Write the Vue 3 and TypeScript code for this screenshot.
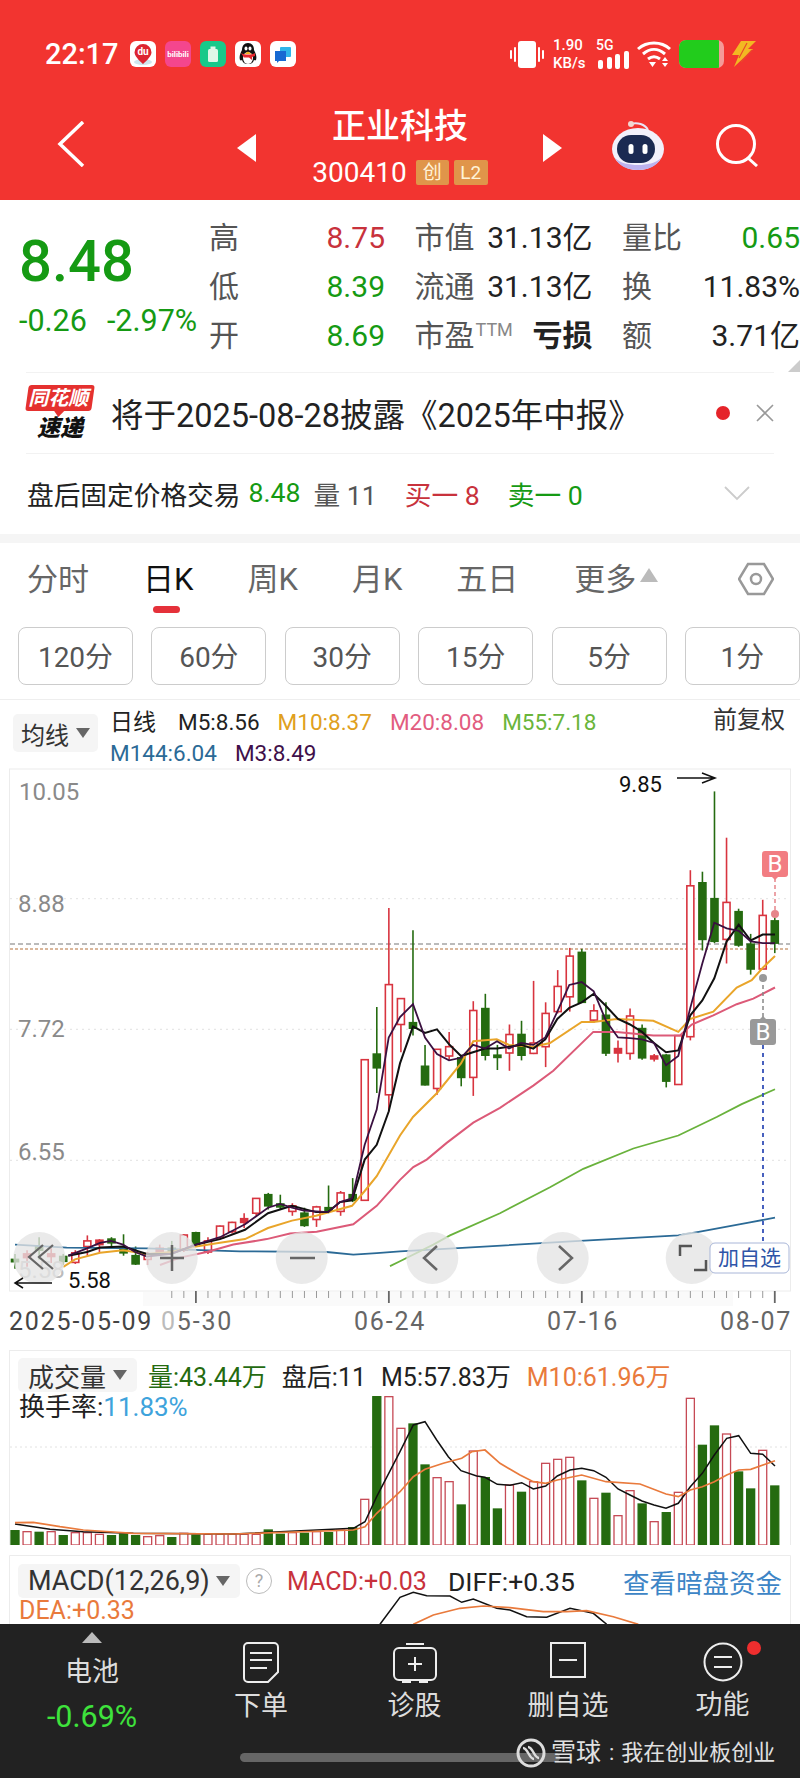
<script setup lang="ts">
// coordinates below are read off the zoomed reference: x * 3, chart y * 2.703
const CX = 3
const CY = 2.703
const px = (x: number) => +(x / CX).toFixed(1)
const py = (y: number) => +(y / CY - 8).toFixed(1)
const barX = (i: number) => 15 + 12.06 * i

type Candle = [number, number, number, number, 'r' | 'g']
const candleData: Candle[] = [
  [1335, 1375, 1350, 1356, 'g'], [1325, 1370, 1335, 1345, 'r'], [1290, 1350, 1315, 1325, 'g'], [1320, 1360, 1335, 1342, 'r'],
  [1335, 1365, 1342, 1355, 'g'], [1325, 1362, 1332, 1358, 'r'], [1285, 1340, 1300, 1315, 'r'], [1295, 1330, 1298, 1310, 'r'],
  [1290, 1320, 1295, 1305, 'g'], [1282, 1340, 1320, 1332, 'g'], [1315, 1365, 1340, 1362, 'g'], [1330, 1365, 1335, 1350, 'r'],
  [1310, 1340, 1320, 1330, 'r'], [1300, 1350, 1320, 1330, 'g'], [1282, 1330, 1284, 1325, 'r'], [1275, 1310, 1278, 1308, 'g'],
  [1290, 1335, 1300, 1330, 'r'], [1258, 1295, 1260, 1292, 'r'], [1248, 1280, 1250, 1275, 'r'], [1225, 1265, 1240, 1250, 'r'],
  [1185, 1235, 1185, 1225, 'r'], [1170, 1215, 1175, 1205, 'g'], [1175, 1215, 1200, 1208, 'g'], [1198, 1232, 1205, 1220, 'r'],
  [1210, 1262, 1225, 1258, 'g'], [1205, 1262, 1208, 1242, 'r'], [1150, 1225, 1210, 1218, 'g'], [1165, 1232, 1170, 1220, 'r'],
  [1130, 1195, 1175, 1190, 'g'], [810, 1190, 810, 1190, 'r'], [668, 900, 795, 832, 'g'], [400, 950, 607, 905, 'r'],
  [645, 790, 645, 715, 'r'], [460, 745, 710, 725, 'g'], [770, 880, 828, 878, 'g'], [782, 905, 782, 888, 'r'],
  [735, 810, 775, 800, 'r'], [800, 882, 805, 858, 'g'], [652, 908, 677, 858, 'r'], [632, 812, 672, 798, 'g'],
  [770, 838, 798, 804, 'g'], [715, 840, 742, 792, 'r'], [705, 812, 742, 798, 'g'], [597, 795, 765, 793, 'r'],
  [655, 830, 685, 775, 'r'], [568, 685, 612, 680, 'r'], [508, 680, 530, 640, 'r'], [510, 655, 520, 655, 'g'],
  [660, 710, 678, 703, 'r'], [655, 800, 690, 792, 'g'], [758, 818, 780, 792, 'r'], [672, 810, 692, 793, 'r'],
  [715, 810, 726, 805, 'g'], [795, 815, 800, 808, 'r'], [795, 885, 798, 868, 'g'], [745, 877, 745, 877, 'r'],
  [298, 758, 340, 748, 'r'], [302, 515, 332, 485, 'g'], [85, 495, 375, 490, 'g'], [210, 550, 385, 485, 'r'],
  [402, 505, 410, 500, 'g'], [470, 580, 498, 565, 'g'], [378, 565, 420, 565, 'r'], [425, 522, 435, 495, 'g'],
]

const candles = candleData.map(([hi, lo, top, bottom, c], i) => ({
  x: barX(i),
  y1: py(hi),
  y2: py(lo),
  top: py(top),
  h: Math.max(py(bottom) - py(top), 2),
  red: c === 'r',
  solid: c === 'g' || py(bottom) - py(top) < 5,
}))

// left part in whole-chart units, right part continues from the second crop
const line = (left: number[], right: number[]) => {
  const out: string[] = []
  for (let i = 0; i < left.length; i += 2) out.push(`${px(left[i])},${py(left[i + 1])}`)
  for (let i = 0; i < right.length; i += 2) out.push(`${px(right[i] + 1200)},${py(right[i + 1])}`)
  return out.join(' ')
}

const maLines = [
  { color: '#2b6a96', w: 1.8, pts: line([45, 1310, 200, 1318, 440, 1320, 720, 1328, 980, 1330, 1060, 1337, 1130, 1333], [0, 1328, 200, 1318, 500, 1302, 835, 1285, 900, 1275, 1050, 1250, 1125, 1237]) },
  { color: '#69b23c', w: 1.8, pts: line([1170, 1368], [0, 1355, 100, 1310, 150, 1285, 300, 1225, 450, 1155, 550, 1105, 700, 1050, 835, 1015, 950, 965, 1025, 930, 1125, 890]) },
  { color: '#dc5a78', w: 2, pts: line([480, 1365, 540, 1345, 620, 1330, 700, 1310, 800, 1295, 870, 1280, 950, 1275, 1060, 1255, 1130, 1205], [0, 1135, 40, 1100, 80, 1080, 140, 1035, 220, 980, 300, 940, 400, 880, 460, 840, 580, 735, 650, 735, 760, 745, 840, 745, 875, 715, 940, 690, 1010, 660, 1060, 645, 1125, 615]) },
  { color: '#e9a52a', w: 2, pts: line([190, 1370, 225, 1350, 300, 1332, 369, 1325, 441, 1335, 513, 1330, 588, 1315, 660, 1305, 735, 1295, 804, 1265, 876, 1245, 948, 1232, 1056, 1205, 1094, 1165, 1130, 1125], [0, 1015, 39, 965, 111, 900, 183, 820, 220, 760, 290, 755, 327, 770, 400, 775, 450, 765, 545, 708, 580, 708, 650, 700, 760, 705, 835, 735, 870, 700, 940, 680, 1010, 615, 1055, 595, 1090, 560, 1125, 530]) },
  { color: '#111111', w: 2, pts: line([205, 1340, 261, 1330, 300, 1318, 369, 1315, 441, 1335, 513, 1335, 588, 1310, 660, 1295, 735, 1270, 804, 1225, 876, 1205, 948, 1222, 984, 1222, 1020, 1195, 1056, 1190, 1094, 1080, 1130, 1040, 1166, 950], [0, 820, 39, 720, 75, 738, 111, 728, 147, 768, 183, 800, 219, 790, 255, 780, 291, 780, 327, 775, 363, 770, 400, 780, 436, 755, 472, 700, 508, 670, 545, 655, 581, 632, 618, 665, 654, 700, 690, 715, 726, 735, 762, 765, 798, 790, 835, 785, 871, 690, 907, 650, 943, 590, 980, 490, 1016, 445, 1052, 488, 1088, 472, 1125, 472]) },
  { color: '#3a1040', w: 1.8, pts: line([205, 1340, 261, 1320, 300, 1305, 333, 1300, 369, 1310, 405, 1330, 441, 1342, 513, 1335, 588, 1310, 660, 1290, 735, 1255, 804, 1210, 840, 1200, 876, 1210, 912, 1218, 984, 1222, 1020, 1195, 1056, 1185, 1094, 1040, 1130, 945, 1166, 750], [0, 695, 39, 660, 75, 750, 111, 795, 147, 812, 183, 805, 219, 770, 255, 780, 291, 760, 327, 780, 363, 765, 400, 770, 436, 750, 472, 680, 508, 608, 545, 600, 581, 625, 618, 705, 654, 750, 690, 752, 726, 755, 762, 765, 798, 825, 835, 800, 871, 670, 907, 550, 943, 440, 980, 455, 1016, 462, 1052, 490, 1088, 495, 1125, 495]) },
]

const gridY = [375, 728, 1082].map(py)
const ticks = Array.from({ length: 64 }, (_, i) => ({ x: barX(i), major: i === 15 || i === 31 || i === 47 || i === 63 })).slice(13)
const overlayBtns = [118, 515, 905, 1297, 1688, 2075].map(px)

const volTops: [number, 'r' | 'g'][] = [
  [572, 'g'], [575, 'r'], [577, 'g'], [575, 'r'], [587, 'g'], [578, 'r'], [578, 'r'], [583, 'r'], [587, 'g'], [582, 'g'], [587, 'g'], [590, 'r'],
  [587, 'r'], [593, 'g'], [580, 'r'], [585, 'g'], [583, 'r'], [583, 'r'], [583, 'r'], [583, 'r'], [583, 'r'], [570, 'g'], [583, 'g'], [578, 'r'],
  [580, 'g'], [575, 'r'], [578, 'g'], [570, 'r'], [563, 'g'], [478, 'r'], [170, 'g'], [170, 'r'], [265, 'r'], [252, 'g'], [375, 'g'], [413, 'r'],
  [425, 'r'], [495, 'g'], [333, 'r'], [413, 'g'], [507, 'g'], [435, 'r'], [457, 'g'], [425, 'r'], [370, 'r'], [358, 'r'], [352, 'r'], [423, 'g'],
  [475, 'r'], [460, 'g'], [527, 'r'], [452, 'r'], [492, 'g'], [545, 'r'], [518, 'g'], [457, 'r'], [175, 'r'], [316, 'g'], [258, 'g'], [282, 'r'],
  [396, 'g'], [447, 'g'], [331, 'r'], [438, 'g'],
]
const VOL_TOP = 30 // first zoomed y inside the volume panel
const volBars = volTops.map(([top, c], i) => ({
  x: barX(i) - 4,
  y: (top - VOL_TOP) / 3,
  h: (615 - top) / 3,
  red: c === 'r',
}))

const line3 = (left: number[], right: number[], top: number) => {
  const out: string[] = []
  for (let i = 0; i < left.length; i += 2) out.push(`${px(left[i])},${((left[i + 1] - top) / 3).toFixed(1)}`)
  for (let i = 0; i < right.length; i += 2) out.push(`${px(right[i] + 1200)},${((right[i + 1] - top) / 3).toFixed(1)}`)
  return out.join(' ')
}
const volBlack = line3([45, 552, 150, 568, 250, 575, 400, 580, 700, 582, 1060, 565, 1095, 545, 1130, 470], [0, 335, 40, 255, 75, 245, 110, 300, 145, 350, 183, 392, 230, 408, 255, 412, 292, 433, 330, 436, 365, 428, 400, 447, 437, 438, 472, 408, 510, 390, 545, 385, 581, 392, 618, 412, 654, 447, 690, 465, 726, 483, 762, 495, 798, 505, 835, 490, 871, 440, 907, 400, 943, 345, 980, 295, 1016, 287, 1052, 340, 1088, 343, 1125, 378], VOL_TOP)
const volOrange = line3([45, 548, 100, 547, 180, 560, 250, 570, 400, 580, 700, 582, 1060, 570, 1095, 560, 1130, 520], [0, 455, 40, 410, 75, 388, 130, 370, 185, 355, 215, 335, 255, 330, 300, 370, 360, 405, 400, 425, 437, 430, 472, 420, 545, 405, 618, 425, 720, 432, 798, 462, 835, 470, 871, 450, 907, 440, 943, 425, 980, 405, 1016, 390, 1052, 388, 1125, 362], VOL_TOP)

const MACD_TOP = 645
const macdBlack = line3([1140, 853], [0, 772, 40, 757, 80, 767, 150, 768, 185, 787, 220, 777, 290, 805, 330, 810, 380, 830, 440, 832, 510, 805, 580, 820, 620, 853], MACD_TOP)
const macdOrange = line3([], [40, 853, 100, 825, 180, 805, 250, 798, 330, 803, 430, 815, 500, 815, 560, 812, 640, 830, 715, 853], MACD_TOP)

const periods = ['120分', '60分', '30分', '15分', '5分', '1分']
const tabs = ['分时', '日K', '周K', '月K', '五日']
const cells = [
  { k: '高', v: '8.75', c: 'up' }, { k: '市值', v: '31.13亿', c: '' }, { k: '量比', v: '0.65', c: 'down' },
  { k: '低', v: '8.39', c: 'down' }, { k: '流通', v: '31.13亿', c: '' }, { k: '换', v: '11.83%', c: '' },
  { k: '开', v: '8.69', c: 'down' }, { k: '市盈', sup: 'TTM', v: '亏损', c: 'heavy' }, { k: '额', v: '3.71亿', c: '' },
]
</script>

<template>
  <div class="page">
    <header class="head">
      <div class="status">
        <span class="time">22:17</span>
        <div class="apps">
          <svg width="26" height="26" viewBox="0 0 26 26"><rect width="26" height="26" rx="6" fill="#fff" /><ellipse cx="13" cy="21" rx="9" ry="3" fill="#cfe6ee" /><path d="M13 3a8.500 8.500 0 0 1 8.500 8.500C21.500 16 13 23 13 23S4.500 16 4.500 11.500A8.500 8.500 0 0 1 13 3z" fill="#dd2530" /><text class="du" x="13" y="14">du</text></svg>
          <svg width="26" height="26" viewBox="0 0 26 26"><rect width="26" height="26" rx="6" fill="#f4468d" /><text class="bili" x="13" y="16">bilibili</text></svg>
          <svg width="26" height="26" viewBox="0 0 26 26"><rect width="26" height="26" rx="6" fill="#18c98a" /><rect x="8" y="8" width="10" height="13" rx="1.500" fill="#dff7e8" /><rect x="10.500" y="5.500" width="5" height="2.500" fill="#dff7e8" /></svg>
          <svg width="26" height="26" viewBox="0 0 26 26"><rect width="26" height="26" rx="6" fill="#fff" /><path d="M13 2c4 0 6 3 6 7 2 4 3 7 2 10-1 1-2 0-2 0-1 3-3 4-6 4s-5-1-6-4c0 0-1 1-2 0-1-3 0-6 2-10 0-4 2-7 6-7z" fill="#111" /><ellipse cx="13" cy="17" rx="5" ry="6" fill="#fff" /><path d="M6 12c4 2 10 2 14 0v3l-3 1v3l-3-2.500H9z" fill="#e5262c" /><path d="M9.500 13 13 10.500l3.500 2.500z" fill="#f4b41a" /><ellipse cx="11" cy="7.500" rx="1.500" ry="2" fill="#fff" /><ellipse cx="15" cy="7.500" rx="1.500" ry="2" fill="#fff" /></svg>
          <svg width="26" height="26" viewBox="0 0 26 26"><rect width="26" height="26" rx="6" fill="#fff" /><rect x="10" y="6" width="11" height="10" rx="1" fill="#2fb5ea" /><path d="M5 10h11v10H9l-2 2v-2H5z" fill="#1769d2" /></svg>
        </div>
        <div class="sys">
          <svg class="vib" width="34" height="27" viewBox="0 0 34 27"><rect x="8" y="0" width="18" height="27" rx="3" fill="#fff" /><path d="M5 7v13M1 10v7M29 7v13M33 10v7" stroke="#fff" stroke-width="2" stroke-linecap="round" /></svg>
          <div class="speed"><span>1.90</span><span>KB/s</span></div>
          <div class="net">
            <span class="g5">5G</span>
            <svg width="34" height="18" viewBox="0 0 34 18"><rect x="2" y="9" width="5" height="9" rx="2" fill="#fff" /><rect x="11" y="6" width="5" height="12" rx="2" fill="#fff" /><rect x="19" y="3" width="5" height="15" rx="2" fill="#fff" /><rect x="28" y="0" width="5" height="18" rx="2" fill="#fff" /></svg>
          </div>
          <svg class="wifi" width="34" height="27" viewBox="0 0 34 27"><path d="M1 8C10 0 24 0 33 8M6 13c7-6 15-6 22 0M11 18c4-3 8-3 12 0" fill="none" stroke="#fff" stroke-width="3" /><path d="m12 21 7 0-3.500 5zM25 20l3-4 3 4zM25 22h6l-3 4z" fill="#fff" /></svg>
          <div class="batt"><i></i></div>
          <svg class="bolt" width="24" height="26" viewBox="0 0 24 26"><path d="M9 0h15l-8 8 5 0L2 26l5-12H0z" fill="#f2b822" /><path d="M15 2 7 17M20 9 9 21" stroke="#ea4a2a" stroke-width="1.200" /></svg>
        </div>
      </div>
      <div class="bar">
        <svg class="back" width="28" height="46" viewBox="0 0 28 46"><path d="M26 1 3 23l23 22" fill="none" stroke="#fff" stroke-width="3.500" /></svg>
        <span class="tri left"></span>
        <div class="name">
          <div class="cn">正业科技</div>
          <div class="code">300410<b>创</b><b class="l2">L2</b></div>
        </div>
        <span class="tri right"></span>
        <svg class="robot" width="54" height="50" viewBox="0 0 54 50"><path d="M20 4c6-2 14 0 17 6" fill="none" stroke="#e9e4f5" stroke-width="2" /><circle cx="20" cy="4" r="3" fill="#f2d6d0" /><ellipse cx="27" cy="29" rx="26" ry="21" fill="#f2f0fb" /><path d="M4 38c4 8 12 12 23 12s19-4 23-12c-5 5-14 7-23 7S9 43 4 38z" fill="#bdb2ee" /><rect x="6" y="15" width="38" height="28" rx="14" fill="#1b2a52" /><rect x="17.500" y="24" width="5" height="10" rx="2.500" fill="#fff" /><rect x="31.500" y="24" width="5" height="10" rx="2.500" fill="#fff" /></svg>
        <svg class="search" width="46" height="44" viewBox="0 0 46 44"><circle cx="21" cy="21" r="18.500" fill="none" stroke="#fff" stroke-width="3" /><path d="m33 35 9 8" stroke="#fff" stroke-width="3" /></svg>
      </div>
    </header>

    <section class="quote">
      <div class="now">
        <div class="price">8.48</div>
        <div class="chg"><span>-0.26</span><span>-2.97%</span></div>
      </div>
      <div class="cells">
        <div v-for="c in cells" :key="c.k" class="cell">
          <span class="k">{{ c.k }}<sup v-if="c.sup">{{ c.sup }}</sup></span>
          <span :class="c.c">{{ c.v }}</span>
        </div>
      </div>
      <span class="corner"></span>
    </section>

    <section class="notice">
      <div class="logo">
        <div class="logo-top"><span>同花顺</span></div>
        <div class="logo-bot">速递</div>
      </div>
      <span class="notice-text">将于2025-08-28披露《2025年中报》</span>
      <span class="dot"></span>
      <svg width="18" height="18" viewBox="0 0 18 18"><path d="m1 1 16 16M17 1 1 17" stroke="#999" stroke-width="1.600" /></svg>
    </section>

    <section class="after">
      <span>盘后固定价格交易</span>
      <span class="down a-price">8.48</span>
      <span class="muted a-vol">量 11</span>
      <span class="up a-buy">买一 8</span>
      <span class="down a-sell">卖一 0</span>
      <svg class="a-open" width="26" height="15" viewBox="0 0 26 15"><path d="m1 1 12 12L25 1" fill="none" stroke="#ccc" stroke-width="1.800" /></svg>
    </section>

    <nav class="tabs">
      <span v-for="t in tabs" :key="t" class="tab" :class="{ on: t === '日K' }">{{ t }}</span>
      <span class="tab more">更多<i></i></span>
      <svg class="hex" width="36" height="36" viewBox="0 0 36 36"><path d="M10 3h16l9 15-9 15H10L1 18z" fill="none" stroke="#999" stroke-width="2.500" /><circle cx="18" cy="18" r="5" fill="none" stroke="#999" stroke-width="2.500" /></svg>
    </nav>

    <div class="periods">
      <button v-for="p in periods" :key="p" class="period">{{ p }}</button>
    </div>

    <section class="legend">
      <div class="chip"><span>均线</span><i></i></div>
      <div class="legend-lines">
        <div><span class="ink l-name">日线</span><span class="ink">M5:8.56</span><span class="m10">M10:8.37</span><span class="m20">M20:8.08</span><span class="m55">M55:7.18</span></div>
        <div><span class="m144">M144:6.04</span><span class="m3">M3:8.49</span></div>
      </div>
      <span class="fq">前复权</span>
    </section>

    <svg class="kline" width="800" height="582" viewBox="0 0 800 582">
      <rect x="9.500" y="1" width="781" height="522" fill="#fff" stroke="#ececec" />
      <rect x="143" y="524" width="590" height="14" fill="#fafafa" />
      <line v-for="y in gridY" :key="y" x1="10" x2="790" :y1="y" :y2="y" stroke="#e2e2e2" stroke-dasharray="2 4" />
      <text class="ax" x="19" y="32">10.05</text>
      <text class="ax" x="18" y="144">8.88</text>
      <text class="ax" x="18" y="269">7.72</text>
      <text class="ax" x="18" y="392">6.55</text>
      <line x1="10" x2="790" y1="176" y2="176" stroke="#777" stroke-dasharray="5 3" />
      <line x1="10" x2="790" y1="181" y2="181" stroke="#b5713a" stroke-dasharray="3 2" />
      <g v-for="(c, i) in candles" :key="i">
        <line :x1="c.x" :x2="c.x" :y1="c.y1" :y2="c.y2" :stroke="c.red ? '#d8343f' : '#256b10'" stroke-width="1.600" />
        <rect :x="c.x - 3.5" :y="c.top" width="7" :height="c.h" :fill="c.solid ? (c.red ? '#d8343f' : '#256b10') : '#fff'" :stroke="c.red ? '#d8343f' : '#256b10'" stroke-width="1.600" />
      </g>
      <polyline v-for="l in maLines" :key="l.color" :points="l.pts" fill="none" :stroke="l.color" :stroke-width="l.w" />
      <text class="mark" x="619" y="24">9.85</text>
      <path d="M677 10h38m-13-5 13 5-13 5" fill="none" stroke="#111" stroke-width="1.500" />
      <text class="ax pale" x="18" y="510">5.58</text>
      <g v-for="x in overlayBtns" :key="x"><circle :cx="x" cy="490" r="26" fill="#e4e4e4" fill-opacity=".78" /></g>
      <path d="M43 477 29 489l14 12M53 477 39 489l14 12" fill="none" stroke="#666" stroke-width="2.200" />
      <path d="M184 490h-24M172 477v26" stroke="#666" stroke-width="2.500" />
      <path d="M315 490h-25" stroke="#666" stroke-width="2.500" />
      <path d="m437 478-13 12 13 12" fill="none" stroke="#666" stroke-width="2.500" />
      <path d="m559 478 13 12-13 12" fill="none" stroke="#666" stroke-width="2.500" />
      <path d="M680 488v-10h12M706 492v10h-12" fill="none" stroke="#555" stroke-width="2.500" />
      <path d="M52 515H16m7-5-8 5 8 5" fill="none" stroke="#111" stroke-width="1.500" />
      <text class="mark" x="68" y="520">5.58</text>

      <path d="M775 110v36" stroke="#e6858a" stroke-width="1.500" stroke-dasharray="4 3" />
      <circle cx="775" cy="146" r="4" fill="#e6858a" />
      <rect x="762" y="83" width="26" height="26" rx="3" fill="#f27d82" />
      <path d="m771 108 4 4 4-4z" fill="#f27d82" />
      <text class="b" x="775" y="104">B</text>
      <path d="M763 210v44" stroke="#888" stroke-width="1.500" stroke-dasharray="4 3" />
      <circle cx="763" cy="210" r="4" fill="#999" />
      <rect x="750" y="251" width="26" height="26" rx="3" fill="#999" />
      <path d="m759 252 4-4 4 4z" fill="#999" />
      <text class="b" x="763" y="272">B</text>
      <path d="M763 277v199" stroke="#3450b8" stroke-width="1.800" stroke-dasharray="4 4" />
      <rect x="710" y="475" width="79" height="30" rx="5" fill="#fff" stroke="#a9b6d8" />
      <text class="add" x="749.500" y="497">加自选</text>

      <line v-for="t in ticks" :key="t.x" :x1="t.x" :x2="t.x" y1="523" :y2="t.major ? 535 : 530" :stroke="t.major ? '#666' : '#999'" :stroke-width="t.major ? 1.800 : 1" />
      <text class="date dark" x="9" y="562">2025-05-09</text>
      <text class="date" x="161" y="562"><tspan fill="#bbb">0</tspan>5-30</text>
      <text class="date" x="354" y="562">06-24</text>
      <text class="date" x="547" y="562">07-16</text>
      <text class="date" x="720" y="562">08-07</text>
    </svg>

    <section class="panel vol">
      <svg width="800" height="195" viewBox="0 0 800 195">
        <rect x="9.500" y="0.500" width="781" height="195" fill="#fff" stroke="#ececec" />
        <line x1="10" x2="790" y1="97" y2="97" stroke="#e2e2e2" stroke-dasharray="2 3" />
        <rect v-for="(b, i) in volBars" :key="i" :x="b.x" :y="b.y" width="8" :height="b.h" :fill="b.red ? '#fff' : '#256b10'" :stroke="b.red ? '#c64a55' : '#256b10'" stroke-width="1.300" />
        <polyline :points="volBlack" fill="none" stroke="#111" stroke-width="1.500" />
        <polyline :points="volOrange" fill="none" stroke="#e97a3c" stroke-width="1.700" />
      </svg>
      <div class="panel-head">
        <div class="chip vchip"><span>成交量</span><i></i></div>
        <span class="green-d v1">量:43.44万</span>
        <span class="ink v2">盘后:11</span>
        <span class="ink v3">M5:57.83万</span>
        <span class="orange v4">M10:61.96万</span>
      </div>
      <div class="turn"><span class="ink">换手率:</span><span class="sky">11.83%</span></div>
    </section>

    <section class="panel macd">
      <svg width="800" height="69" viewBox="0 0 800 69">
        <path d="M9.500 69V.5h781V69" fill="none" stroke="#ececec" />
        <polyline :points="macdBlack" fill="none" stroke="#111" stroke-width="1.500" />
        <polyline :points="macdOrange" fill="none" stroke="#e97a3c" stroke-width="1.700" />
      </svg>
      <div class="panel-head mhead">
        <div class="chip mchip"><span>MACD(12,26,9)</span><i></i></div>
        <span class="qm">?</span>
        <span class="red m1">MACD:+0.03</span>
        <span class="ink m2">DIFF:+0.35</span>
        <span class="link">查看暗盘资金</span>
      </div>
      <div class="dea">DEA:+0.33</div>
    </section>

    <footer class="foot">
      <div class="fitem first">
        <i class="up-tri"></i>
        <span class="f-name">电池</span>
        <span class="f-pct">-0.69%</span>
      </div>
      <div class="fitem w1">
        <svg width="36" height="41" viewBox="0 0 36 41"><path d="M5 1h26a4 4 0 0 1 4 4v25L25 40H5a4 4 0 0 1-4-4V5a4 4 0 0 1 4-4z" fill="none" stroke="#eee" stroke-width="2" /><path d="M7 11h22M7 18h22M7 26h17" stroke="#eee" stroke-width="2" /></svg>
        <span>下单</span>
      </div>
      <div class="fitem w2">
        <svg width="44" height="41" viewBox="0 0 44 41"><rect x="1" y="6" width="42" height="32" rx="5" fill="none" stroke="#eee" stroke-width="2" /><path d="M13 2h18M22 15v14M15 22h14M10 38v2h8M26 40h8v-2" fill="none" stroke="#eee" stroke-width="2" /></svg>
        <span>诊股</span>
      </div>
      <div class="fitem w3">
        <svg width="36" height="36" viewBox="0 0 36 36"><rect x="1" y="1" width="34" height="34" fill="none" stroke="#eee" stroke-width="2" /><path d="M9 18h18" stroke="#eee" stroke-width="2" /></svg>
        <span class="f-gap">删自选</span>
      </div>
      <div class="fitem w4">
        <svg width="40" height="40" viewBox="0 0 40 40"><circle cx="20" cy="20" r="18.500" fill="none" stroke="#eee" stroke-width="2" /><path d="M11 15h18M11 25h18" stroke="#eee" stroke-width="2" /></svg>
        <span>功能</span>
        <i class="f-dot"></i>
      </div>
      <div class="home"></div>
      <div class="mark-wm">
        <svg width="30" height="30" viewBox="0 0 30 30"><circle cx="15" cy="15" r="13" fill="none" stroke="#ddd" stroke-width="3" /><path d="M7 10c5 0 6 11 11 11M23 20c-5 0-6-11-11-11" fill="none" stroke="#ddd" stroke-width="2.500" /></svg>
        <span class="wm-a">雪球</span><span class="wm-c">:</span><span class="wm-b">我在创业板创业</span>
      </div>
    </footer>
  </div>
</template>

<style scoped>
.page {
  position: relative;
  width: 800px;
  height: 1778px;
  overflow: hidden;
  background: #fff;
  font-family: Roboto, "Noto Sans CJK SC", sans-serif;
  color: #222;
}
.head { height: 200px; background: #f23430; color: #fff; }
.status { display: flex; align-items: center; height: 54px; padding: 27px 44px 0 45px; }
.time { font-size: 29px; font-weight: 500; width: 85px; }
.apps { display: flex; gap: 9px; }
.du { font-size: 10px; font-weight: 700; fill: #fff; text-anchor: middle; }
.bili { font-size: 8px; font-weight: 700; fill: #fff; text-anchor: middle; }
.sys { display: flex; align-items: center; margin-left: auto; }
.speed { display: flex; flex-direction: column; align-items: flex-start; font-size: 15px; line-height: 18px; font-weight: 500; margin-left: 9px; width: 43px; }
.net { display: flex; flex-direction: column; width: 41px; font-weight: 500; }
.g5 { font-size: 14px; line-height: 12px; }
.wifi { width: 34px; }
.batt { width: 45px; height: 28px; margin-left: 8px; background: #f59a98; border-radius: 7px; overflow: hidden; }
.batt i { display: block; width: 40px; height: 100%; background: #22cc1c; }
.bolt { margin-left: 8px; }
.bar { position: relative; display: flex; align-items: center; justify-content: center; height: 100px; margin-top: 4px; }
.back { position: absolute; left: 57px; top: 36px; }
.tri { position: absolute; top: 49px; width: 0; height: 0; border-top: 14px solid transparent; border-bottom: 14px solid transparent; }
.tri.left { left: 237px; border-right: 19px solid #fff; }
.tri.right { left: 543px; border-left: 19px solid #fff; }
.robot { position: absolute; left: 611px; top: 35px; }
.search { position: absolute; left: 715px; top: 38px; }
.name { display: flex; flex-direction: column; align-items: center; margin-top: 19px; }
.cn { font-size: 34px; line-height: 44px; font-weight: 500; }
.code { display: flex; align-items: center; gap: 5px; margin-top: 12px; font-size: 28px; line-height: 26px; }
.code b { display: inline-block; width: 33px; height: 25px; line-height: 25px; margin-left: 4px; text-align: center; background: #e0954a; color: #fff3d8; font-size: 19px; font-weight: 400; border-radius: 2px; }
.code b.l2 { width: 34px; margin-left: 0; }

.quote { position: relative; display: flex; height: 172px; padding: 12px 0 0 19px; box-sizing: border-box; }
.now { width: 190px; flex: none; }
.price { font-size: 58px; line-height: 66px; font-weight: 500; color: #159a13; margin-top: 16px; }
.chg { display: flex; gap: 20px; font-size: 30.500px; line-height: 36px; color: #159a13; margin-top: 9px; white-space: nowrap; }
.cells { display: grid; grid-template-columns: 176px 178px 178px; column-gap: 29.500px; grid-auto-rows: 49px; font-size: 30px; line-height: 49px; margin-top: 1px; white-space: nowrap; }
.cell { display: flex; justify-content: space-between; }
.k { color: #555; }
.k sup { font-size: 18px; line-height: 0; color: #888; vertical-align: 10px; margin-left: 1px; }
.heavy { font-weight: 700; }
.up { color: #c8323c; }
.down { color: #159a13; }
.corner { position: absolute; right: 0; bottom: 0; width: 0; height: 0; border-left: 12px solid transparent; border-bottom: 12px solid #ccc; }

.notice { display: flex; align-items: center; height: 80px; margin: 0 26px; border-top: 1px solid #f2f2f2; border-bottom: 1px solid #f2f2f2; }
.logo { width: 66px; height: 56px; margin: 0 0 0 1px; text-align: center; flex: none; }
.logo-top { position: relative; height: 26px; line-height: 26px; background: #e5312f; color: #fff; font-size: 20px; font-weight: 700; border-radius: 3px; transform: skewX(-8deg); }
.logo-top span { display: inline-block; transform: skewX(-6deg); }
.logo-top::after { content: ""; position: absolute; left: 29px; top: 26px; width: 0; height: 0; border-left: 5px solid transparent; border-right: 5px solid transparent; border-top: 6px solid #e5312f; }
.logo-bot { margin-top: 5px; font-size: 23px; line-height: 25px; font-weight: 900; font-style: italic; color: #111; }
.notice-text { margin-left: 18px; font-size: 32.500px; margin-top: -2px; color: #222; white-space: nowrap; }
.dot { width: 14px; height: 14px; margin-left: auto; margin-right: 26px; border-radius: 50%; background: #e5242a; }

.after { display: flex; align-items: center; height: 80px; padding: 0 0 2px 27px; box-sizing: content-box; height: 78px; font-size: 26.700px; border-bottom: 9px solid #f5f5f5; white-space: nowrap; }
.a-price { margin-left: 8px; }
.a-vol { margin-left: 13px; }
.muted { color: #555; }
.a-buy { margin-left: 28px; }
.a-sell { margin-left: 28px; }
.a-open { margin-left: auto; margin-right: 50px; }

.tabs { position: relative; display: flex; align-items: center; height: 75px; padding: 0 0 0 27px; font-size: 31px; color: #666; }
.tab { margin-right: 54px; padding-bottom: 9px; white-space: nowrap; }
.tab:nth-child(2) { color: #111; }
.tab.on { position: relative; }
.tab.on::after { content: ""; position: absolute; left: 10px; top: 52px; width: 27px; height: 7px; border-radius: 4px; background: #e5313a; }
.more { position: relative; margin-right: 0; margin-left: 2px; }
.more i { position: absolute; left: 66px; top: 14px; width: 0; height: 0; border-left: 9px solid transparent; border-right: 9px solid transparent; border-bottom: 14px solid #bbb; }
.hex { position: absolute; left: 738px; top: 18px; }

.periods { display: flex; justify-content: space-between; height: 58px; margin: 9px 0 14px 18px; }
.period { width: 115px; height: 58px; padding: 0 0 2px; background: #fff; border: 1px solid #ccc; border-radius: 8px; color: #555; font: 28px Roboto, "Noto Sans CJK SC", sans-serif; }

.legend { position: relative; display: flex; height: 69px; padding: 3px 0 0 13px; border-top: 1px solid #eee; box-sizing: border-box; font-size: 22.500px; white-space: nowrap; }
.chip { display: flex; align-items: center; background: #f5f5f5; border-radius: 5px; font-size: 26px; color: #333; }
.chip i { width: 0; height: 0; margin-left: 7px; border-left: 7px solid transparent; border-right: 7px solid transparent; border-top: 10px solid #666; }
.legend .chip { width: 85px; height: 38px; margin-top: 11px; padding-left: 8px; box-sizing: border-box; font-size: 24px; }
.legend-lines { margin: 4px 0 0 12px; line-height: 30px; }
.legend-lines span { margin-right: 18px; }
.l-name { font-size: 23px; margin-right: 22px !important; }
.ink { color: #222; }
.m10 { color: #e0a020; }
.m20 { color: #e25c80; }
.m55 { color: #6ab53a; }
.m144 { color: #2b6a96; }
.m3 { color: #40104a; }
.fq { position: absolute; left: 713px; top: 4px; font-size: 24px; line-height: 32px; color: #333; }

.kline { display: block; }
.ax { font-size: 24px; fill: #8a8a8a; }
.ax.pale { fill: #bbb; }
.mark { font-size: 22px; fill: #111; }
.b { font-size: 24px; fill: #fff; text-anchor: middle; }
.add { font-size: 21px; fill: #2f55a8; text-anchor: middle; }
.date { font-size: 25px; fill: #666; letter-spacing: 1.800px; }
.date.dark { fill: #444; }

.panel { position: relative; }
.vol { height: 205px; }
.vol svg { display: block; }
.panel-head { position: absolute; left: 18px; top: 8px; display: flex; align-items: center; height: 34px; font-size: 25px; white-space: nowrap; }
.vchip { width: 119px; height: 34px; padding-left: 10px; box-sizing: border-box; }
.v1 { margin-left: 11px; }
.v2 { margin-left: 15px; }
.v3 { margin-left: 15px; }
.v4 { margin-left: 16px; }
.green-d { color: #256b10; }
.orange { color: #e97a3c; }
.turn { position: absolute; left: 19px; top: 42px; font-size: 26px; line-height: 30px; }
.sky { color: #3ea3dc; }
.macd { height: 69px; }
.macd svg { display: block; }
.mhead { top: 9px; }
.mchip { width: 222px; height: 34px; padding-left: 10px; box-sizing: border-box; font-size: 27px; }
.mchip i { margin-left: 6px; }
.qm { width: 24px; height: 24px; margin-left: 6px; border: 1.500px solid #bbb; border-radius: 50%; text-align: center; line-height: 24px; font-size: 18px; color: #aaa; }
.red { color: #c8323c; }
.m1 { margin-left: 15px; }
.m2 { margin-left: 21px; font-size: 26.500px; }
.link { position: absolute; left: 605px; color: #3d85c6; font-size: 26.500px; }
.dea { position: absolute; left: 19px; top: 41px; font-size: 25px; line-height: 29px; color: #e97a3c; }

.foot { position: relative; display: flex; height: 154px; background: #222; color: #ddd; font-size: 27px; }
.fitem { position: relative; display: flex; flex-direction: column; align-items: center; padding-top: 18px; box-sizing: border-box; }
.fitem span { line-height: 36px; margin-top: 5px; }
.first { width: 184px; padding-top: 8px; }
.first .f-name { margin-top: 11px; line-height: 36px; }
.first .f-pct { margin-top: 9px; font-size: 30.500px; color: #3ee23c; }
.up-tri { width: 0; height: 0; border-left: 10px solid transparent; border-right: 10px solid transparent; border-bottom: 11px solid #bbb; }
.w1 { width: 154px; }
.w2 { width: 153px; }
.w3 { width: 154px; }
.w4 { width: 155px; }
.f-gap { margin-top: 10px !important; }
.f-dot { position: absolute; left: 102px; top: 17px; width: 14px; height: 14px; border-radius: 50%; background: #ef2e2e; }
.home { position: absolute; left: 240px; top: 129px; width: 320px; height: 9px; border-radius: 5px; background: #666; }
.mark-wm { position: absolute; left: 516px; top: 114px; display: flex; align-items: center; color: #e0e0e0; white-space: nowrap; }
.mark-wm span { margin: 0; line-height: 30px; }
.wm-a { margin-left: 5px !important; font-size: 25px; }
.wm-c { margin: 0 7px 0 8px !important; font-size: 22px; }
.wm-b { font-size: 22px; }
</style>

<style>
html, body { background: #fff; }
</style>
